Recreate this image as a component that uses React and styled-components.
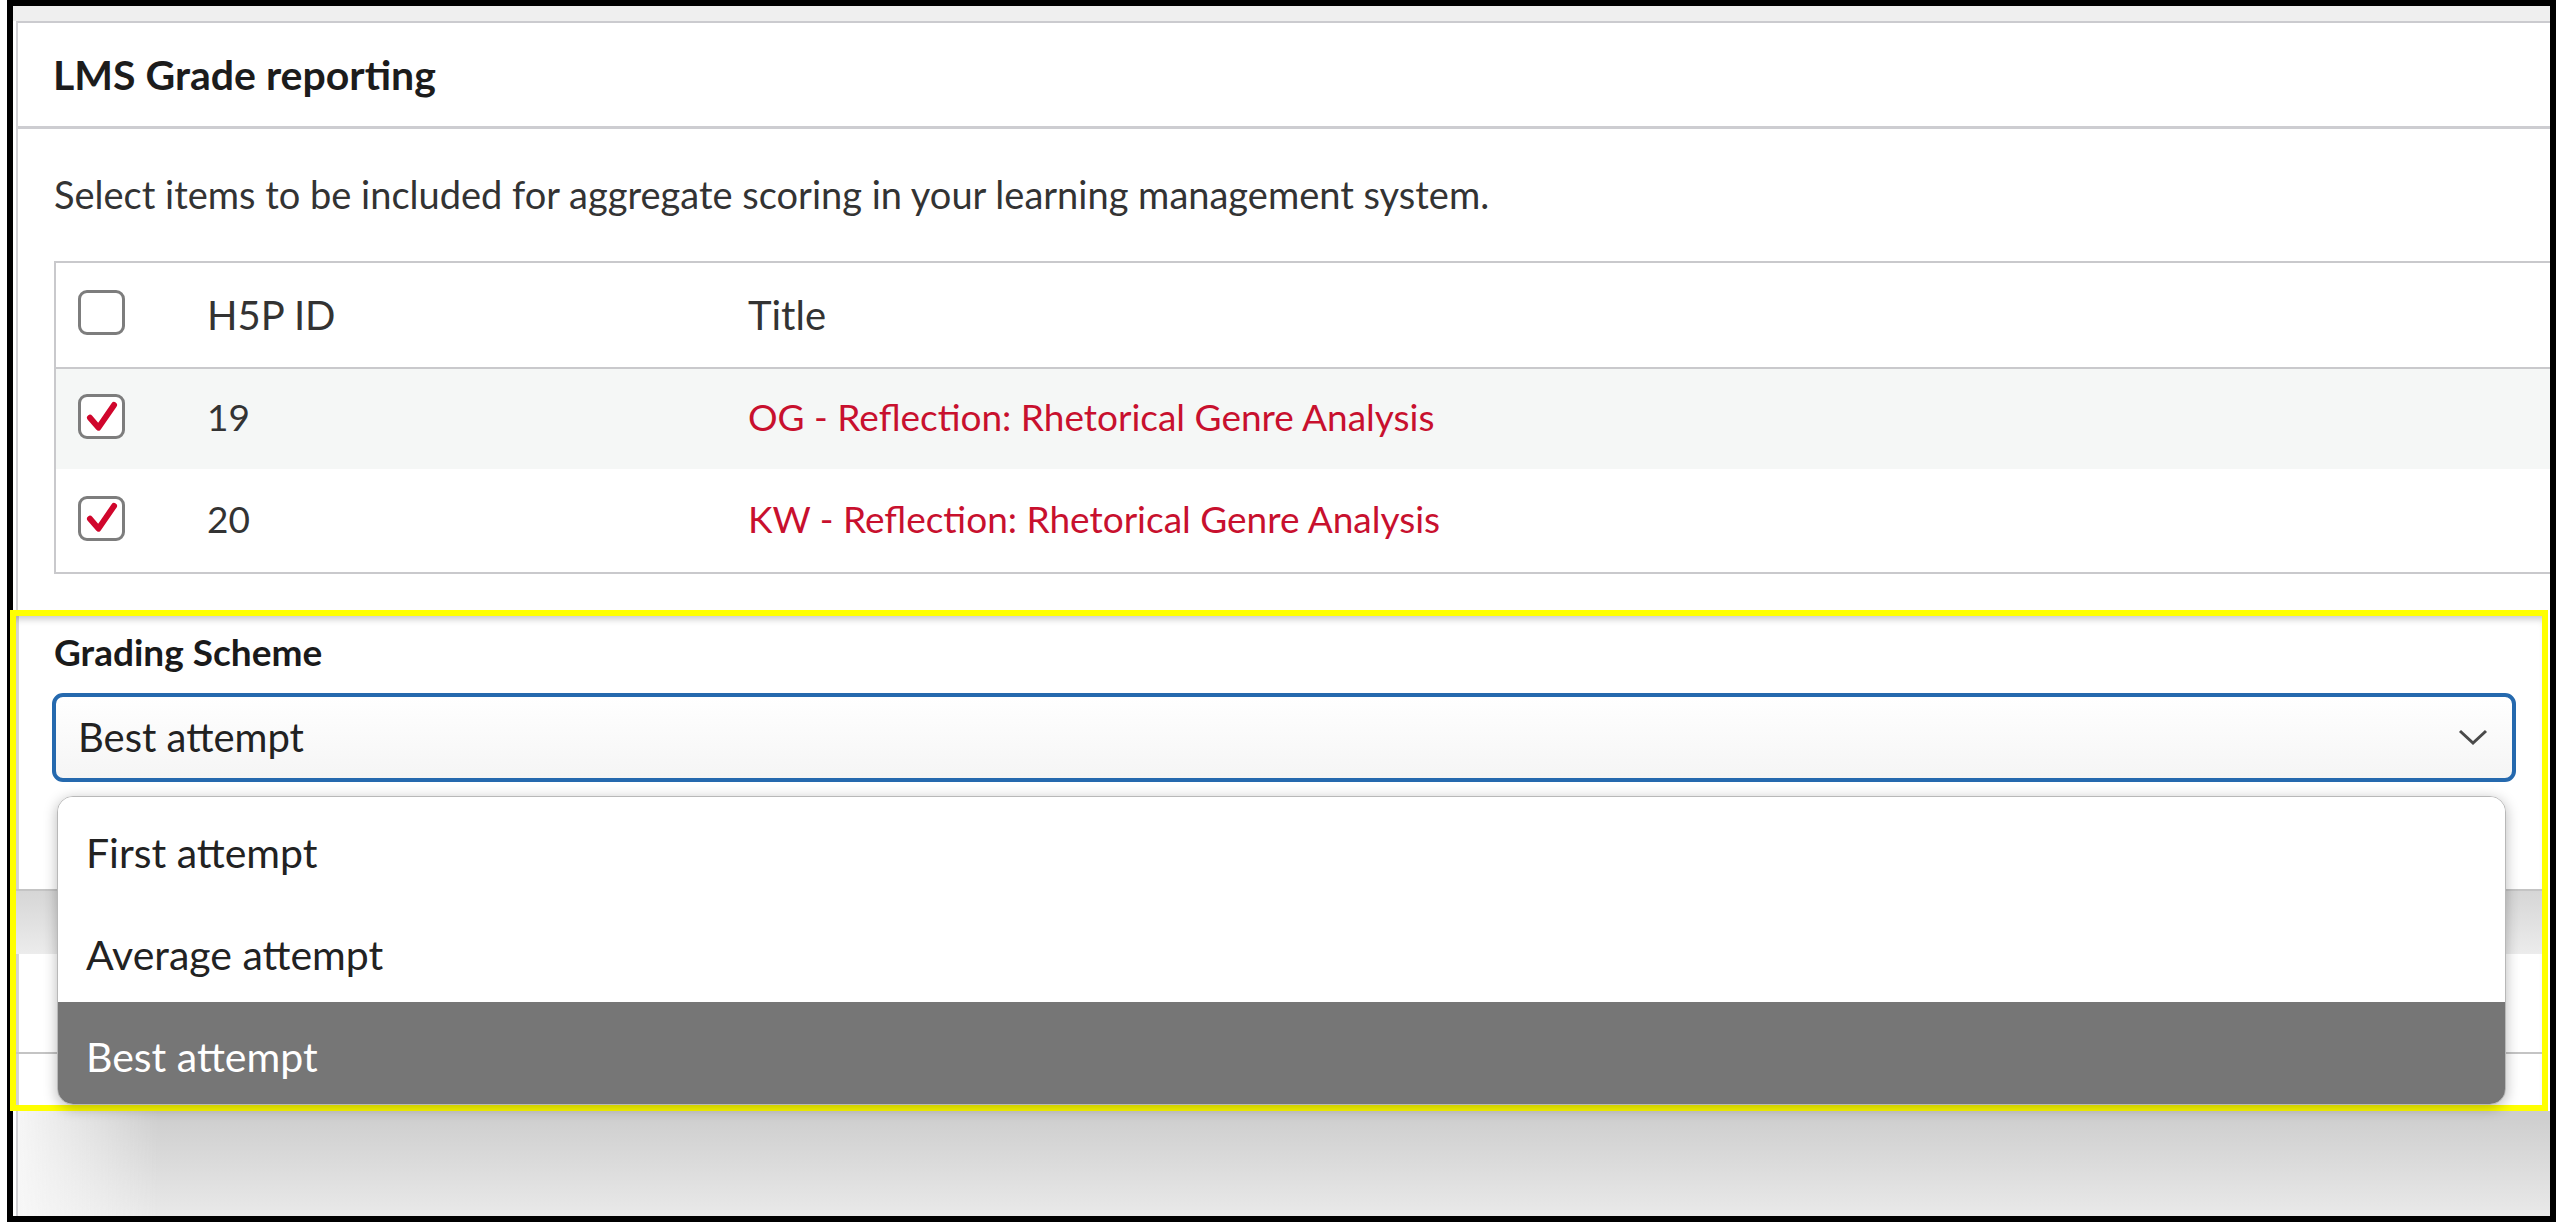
import React from 'react';
import styled, { createGlobalStyle } from 'styled-components';

const GlobalStyle = createGlobalStyle`
  html, body {
    margin: 0;
    padding: 0;
    background: #fff;
  }
  body {
    font-family: Lato, "Open Sans", "Liberation Sans", sans-serif;
    color: #2b2b2b;
  }
  * { box-sizing: border-box; }
`;

const Frame = styled.div`
  margin-left: 7px;
  width: 2549px;
  height: 1222px;
  border: 6px solid #000;
  background: #fff;
  display: flex;
  flex-direction: column;
`;

const TopBar = styled.div`
  height: 15px;
  background: #efefef;
  flex-shrink: 0;
`;

const Card = styled.div`
  flex: 1;
  margin-left: 3px;
  border-top: 2px solid #cbcbcf;
  border-left: 2px solid #d2d2d6;
  background: #fff;
  display: flex;
  flex-direction: column;
`;

const CardHeader = styled.div`
  height: 106px;
  padding-left: 35px;
  display: flex;
  align-items: center;
  border-bottom: 3px solid #cdcdd1;
  font-size: 41px;
  font-weight: 700;
  color: #1c1c1c;
`;

const CardBody = styled.div`
  padding-left: 36px;
`;

const Intro = styled.p`
  margin: 43px 0 43px;
  font-size: 38px;
  line-height: 1.2;
  color: #333;
`;

const Table = styled.div`
  border: 2px solid #c9c9cc;
  border-right: none;
`;

const Row = styled.div`
  display: grid;
  grid-template-columns: 151px 541px 1fr;
  align-items: center;
  height: ${({ $h }) => $h}px;
  background: ${({ $striped }) => ($striped ? '#f5f7f6' : '#fff')};
  border-bottom: ${({ $head }) => ($head ? '2px solid #c9c9cc' : 'none')};
`;

const Cell = styled.div`
  font-size: ${({ $head }) => ($head ? '40px' : '37px')};
  color: ${({ $link }) => ($link ? '#c8102e' : '#333')};
  padding-left: ${({ $box }) => ($box ? '22px' : '0')};
  padding-bottom: ${({ $head }) => ($head ? '0' : '4px')};
  display: flex;
  align-items: center;
`;

const Box = styled.span`
  width: 47px;
  height: 45px;
  border: 3px solid #7d7d7d;
  border-radius: 9px;
  background: #fff;
  display: inline-flex;
  align-items: center;
  justify-content: center;
`;

const Highlight = styled.div`
  margin-top: 36px;
  margin-left: -8px;
  width: calc(100% + 6px);
  height: 501px;
  border: 6px solid #ffff00;
  background: #fff;
  box-shadow: inset 0 7px 7px -4px rgba(0, 0, 0, 0.22), inset 3px 0 0 #d6d6d6;
  flex-shrink: 0;
`;

const Label = styled.div`
  padding: 14px 0 0 38px;
  font-size: 37px;
  font-weight: 700;
  line-height: 1.2;
  color: #1a1a1a;
`;

const Select = styled.div`
  margin: 19px 26px 0 36px;
  height: 89px;
  border: 4px solid #2569ae;
  border-radius: 11px;
  background: linear-gradient(#fff, #f5f5f5);
  padding: 0 24px 0 22px;
  display: flex;
  align-items: center;
  justify-content: space-between;
  font-size: 40px;
  color: #222;
`;

const Underlay = styled.div`
  position: relative;
  height: 323px;
  display: flex;
  flex-direction: column;
`;

const UnderGap = styled.div`
  height: ${({ $h }) => $h}px;
  border-bottom: ${({ $line }) => ($line ? '2px solid #c4c4c4' : 'none')};
  background: ${({ $band }) => ($band ? 'linear-gradient(#d6d6d6, #ececec)' : 'transparent')};
`;

const Menu = styled.div`
  position: absolute;
  top: 14px;
  left: 41px;
  right: 36px;
  bottom: 0;
  background: #fff;
  border: 1px solid #b8b8b8;
  border-radius: 16px;
  box-shadow: 0 3px 14px rgba(0, 0, 0, 0.28);
  overflow: hidden;
  display: flex;
  flex-direction: column;
`;

const Option = styled.div`
  flex: 1;
  display: flex;
  align-items: center;
  padding: 8px 0 0 28px;
  font-size: 41px;
  background: ${({ $active }) => ($active ? '#767676' : '#fff')};
  color: ${({ $active }) => ($active ? '#fff' : '#222')};
`;

const Shade = styled.div`
  flex: 1;
  background:
    linear-gradient(to right, rgba(248, 248, 248, 0.95), rgba(248, 248, 248, 0) 140px),
    linear-gradient(#cdcdcd, #e9e9e9);
`;

const Check = () => (
  <svg width="36" height="34" viewBox="0 0 24 24">
    <path
      d="M3.5 12.5 L9.5 19.5 L20.5 3.5"
      fill="none"
      stroke="#d0062c"
      strokeWidth="4.2"
      strokeLinecap="round"
      strokeLinejoin="round"
    />
  </svg>
);

const Chevron = () => (
  <svg width="30" height="17" viewBox="0 0 30 17">
    <path d="M2 2 L15 14 L28 2" fill="none" stroke="#4a4a4a" strokeWidth="3" />
  </svg>
);

const rows = [
  { id: 19, title: 'OG - Reflection: Rhetorical Genre Analysis' },
  { id: 20, title: 'KW - Reflection: Rhetorical Genre Analysis' },
];

export default function App() {
  return (
    <>
      <GlobalStyle />
      <Frame>
        <TopBar />
        <Card>
          <CardHeader>LMS Grade reporting</CardHeader>
          <CardBody>
            <Intro>Select items to be included for aggregate scoring in your learning management system.</Intro>
            <Table>
              <Row $head $h={106}>
                <Cell $box><Box /></Cell>
                <Cell $head>H5P ID</Cell>
                <Cell $head>Title</Cell>
              </Row>
              {rows.map((r, i) => (
                <Row key={r.id} $h={i === 0 ? 100 : 103} $striped={i === 0}>
                  <Cell $box><Box><Check /></Box></Cell>
                  <Cell>{r.id}</Cell>
                  <Cell $link>{r.title}</Cell>
                </Row>
              ))}
            </Table>
          </CardBody>
          <Highlight>
            <Label>Grading Scheme</Label>
            <Select>
              <span>Best attempt</span>
              <Chevron />
            </Select>
            <Underlay>
              <UnderGap $h={109} $line />
              <UnderGap $h={63} $band />
              <UnderGap $h={100} $line />
              <Menu>
                <Option>First attempt</Option>
                <Option>Average attempt</Option>
                <Option $active>Best attempt</Option>
              </Menu>
            </Underlay>
          </Highlight>
          <Shade />
        </Card>
      </Frame>
    </>
  );
}
